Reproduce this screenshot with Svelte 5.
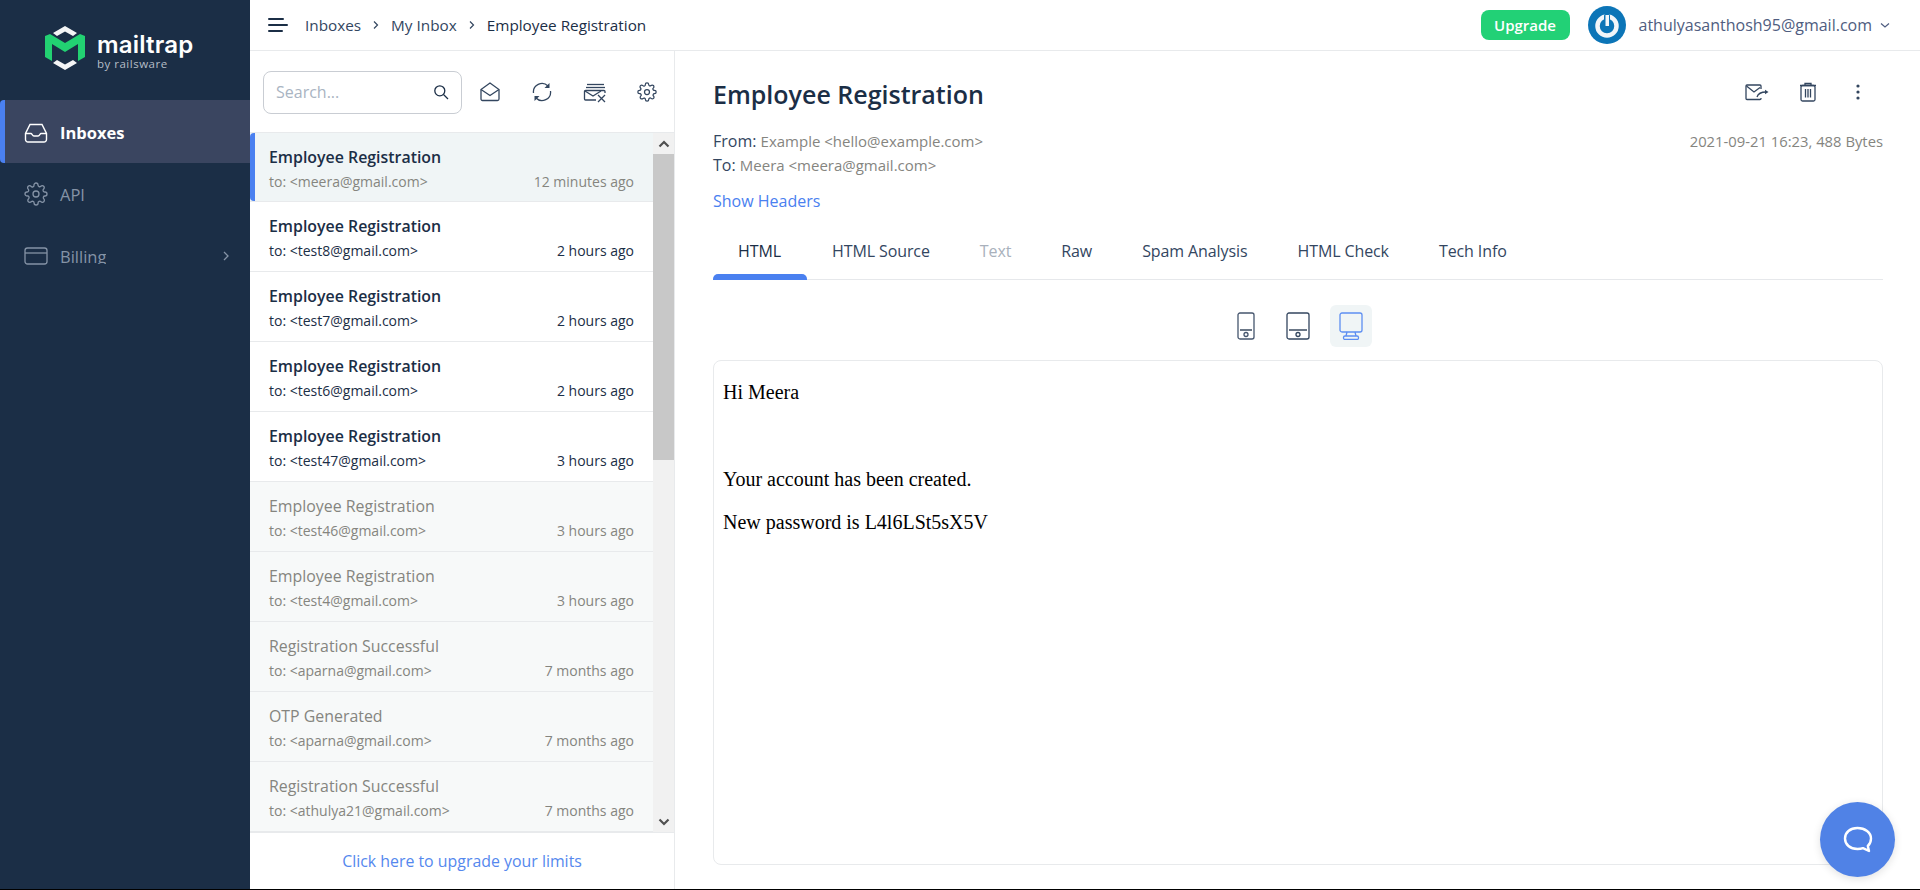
<script lang="ts">
	const messages = [
		{ subject: 'Employee Registration', to: 'meera@gmail.com', time: '12 minutes ago', state: 'selected' },
		{ subject: 'Employee Registration', to: 'test8@gmail.com', time: '2 hours ago', state: 'unread' },
		{ subject: 'Employee Registration', to: 'test7@gmail.com', time: '2 hours ago', state: 'unread' },
		{ subject: 'Employee Registration', to: 'test6@gmail.com', time: '2 hours ago', state: 'unread' },
		{ subject: 'Employee Registration', to: 'test47@gmail.com', time: '3 hours ago', state: 'unread' },
		{ subject: 'Employee Registration', to: 'test46@gmail.com', time: '3 hours ago', state: 'read' },
		{ subject: 'Employee Registration', to: 'test4@gmail.com', time: '3 hours ago', state: 'read' },
		{ subject: 'Registration Successful', to: 'aparna@gmail.com', time: '7 months ago', state: 'read' },
		{ subject: 'OTP Generated', to: 'aparna@gmail.com', time: '7 months ago', state: 'read' },
		{ subject: 'Registration Successful', to: 'athulya21@gmail.com', time: '7 months ago', state: 'read' }
	];

	const tabs = ['HTML', 'HTML Source', 'Text', 'Raw', 'Spam Analysis', 'HTML Check', 'Tech Info'];
</script>

<div class="page">
	<div class="app">
		<aside class="sidebar">
			<div class="logo">
				<svg width="42" height="46" viewBox="0 0 42 46">
					<path d="M21 1 L33 8 L29 11 L21 6.500 L13 11 L9 8 Z" fill="#f4f5f6" />
					<path d="M1 11 L6 9 L21 18 L36 9 L41 11 L41 32 L34 36 L34 19 L21 27 L8 19 L8 36 L1 32 Z" fill="#22d172" />
					<path d="M9 38 L21 45 L33 38 L29 35 L21 39.500 L13 35 Z" fill="#f4f5f6" />
				</svg>
				<div class="logo-text">
					<span class="logo-name">mailtrap</span>
					<span class="logo-by">by railsware</span>
				</div>
			</div>
			<nav>
				<div class="nav-item active">
					<svg width="24" height="24" viewBox="0 0 24 24" fill="none" stroke="#fff" stroke-width="1.400">
						<path d="M6 3.500h12l4.500 9v6a2.500 2.500 0 0 1-2.500 2.500H4a2.500 2.500 0 0 1-2.500-2.500v-6z" />
						<path d="M1.800 12.500H7c1 0 1.200 2.500 3 2.500h4c1.800 0 2-2.500 3-2.500h5.200" />
					</svg>
					<span>Inboxes</span>
				</div>
				<div class="nav-item">
					<svg width="24" height="24" viewBox="0 0 24 24" fill="none" stroke="#8593a6" stroke-width="1.300">
						<circle cx="12" cy="12" r="3" />
						<path d="M19.400 15a1.650 1.650 0 0 0 .33 1.820l.06.06a2 2 0 1 1-2.830 2.830l-.06-.06a1.650 1.650 0 0 0-2.800 1.170V21a2 2 0 1 1-4 0v-.09a1.650 1.650 0 0 0-2.800-1.170l-.06.06a2 2 0 1 1-2.830-2.830l.06-.06A1.650 1.650 0 0 0 3.090 14H3a2 2 0 1 1 0-4h.09a1.650 1.650 0 0 0 1.170-2.800l-.06-.06a2 2 0 1 1 2.830-2.830l.06.06A1.650 1.650 0 0 0 10 3.090V3a2 2 0 1 1 4 0v.09a1.650 1.650 0 0 0 2.800 1.170l.06-.06a2 2 0 1 1 2.830 2.830l-.06.06A1.650 1.650 0 0 0 20.910 10H21a2 2 0 1 1 0 4h-.09a1.650 1.650 0 0 0-1.510 1z" />
					</svg>
					<span>API</span>
				</div>
				<div class="nav-item billing">
					<svg width="24" height="24" viewBox="0 0 24 24" fill="none" stroke="#8593a6" stroke-width="1.300">
						<rect x="1" y="4" width="22" height="16" rx="2.500" />
						<path d="M1 9h22" />
					</svg>
					<span>Billing</span>
					<svg class="chev" width="8" height="12" viewBox="0 0 8 12" fill="none" stroke="#8593a6" stroke-width="1.300">
						<path d="M2 2l4 4-4 4" />
					</svg>
				</div>
			</nav>
		</aside>

		<div class="main">
			<header class="topbar">
				<svg class="burger" width="20" height="16" viewBox="0 0 20 16" fill="#1b2e46">
					<rect y="1" width="16" height="2" rx="1" />
					<rect y="7" width="20" height="2" rx="1" />
					<rect y="13" width="15" height="2" rx="1" />
				</svg>
				<div class="crumbs">
					<span class="crumb">Inboxes</span>
					<svg width="8" height="10" viewBox="0 0 8 10" fill="none" stroke="#33465f" stroke-width="1.200"><path d="M2 1.500L5.500 5 2 8.500" /></svg>
					<span class="crumb">My Inbox</span>
					<svg width="8" height="10" viewBox="0 0 8 10" fill="none" stroke="#33465f" stroke-width="1.200"><path d="M2 1.500L5.500 5 2 8.500" /></svg>
					<span class="crumb current">Employee Registration</span>
				</div>
				<div class="account">
					<span class="upgrade">Upgrade</span>
					<svg class="avatar" width="38" height="38" viewBox="0 0 38 38">
						<circle cx="19" cy="19" r="19" fill="#0c75b7" />
						<circle cx="19" cy="20" r="9.500" fill="none" stroke="#f2f6f9" stroke-width="4.500" />
						<rect x="16" y="8" width="6" height="13" rx="1.500" fill="#0c75b7" />
						<rect x="17.500" y="9" width="3.500" height="11" fill="#f2f6f9" />
					</svg>
					<span class="email">athulyasanthosh95@gmail.com</span>
					<svg width="10" height="7" viewBox="0 0 10 7" fill="none" stroke="#4f5d80" stroke-width="1.200"><path d="M1 1.500l4 3.500 4-3.500" /></svg>
				</div>
			</header>

			<div class="body">
				<section class="list-pane">
					<div class="toolbar">
						<div class="search">
							<span class="placeholder">Search...</span>
							<svg width="16" height="16" viewBox="0 0 16 16" fill="none" stroke="#1b2e46" stroke-width="1.300">
								<circle cx="6.800" cy="6.800" r="5" />
								<path d="M10.500 10.500L15 15" />
							</svg>
						</div>
						<div class="tools">
							<svg width="22" height="22" viewBox="0 0 22 22" fill="none" stroke="#33465f" stroke-width="1.300">
								<path d="M2 8.500L11 2l9 6.500V18a1.500 1.500 0 0 1-1.500 1.500h-15A1.500 1.500 0 0 1 2 18z" />
								<path d="M2 8.500l9 6 9-6" />
							</svg>
							<svg width="22" height="22" viewBox="0 0 22 22" fill="none" stroke="#33465f" stroke-width="1.300">
								<path d="M2.500 12A8.500 8.500 0 0 1 17 5" />
								<path d="M19.500 10A8.500 8.500 0 0 1 5 17" />
								<path d="M18.500 2v5h-5z" fill="#33465f" stroke="none" />
								<path d="M3.500 20v-5h5z" fill="#33465f" stroke="none" />
							</svg>
							<svg width="24" height="22" viewBox="0 0 24 22" fill="none" stroke="#33465f" stroke-width="1.300">
								<path d="M4 3.500h17" />
								<path d="M3 6.500h19" />
								<path d="M13 19H2.500a1 1 0 0 1-1-1V10.500a1 1 0 0 1 1-1h18.500a1 1 0 0 1 1 1V12" />
								<path d="M2 10l8 5 8-5" />
								<path d="M15 14l7 7M22 14l-7 7" />
							</svg>
							<svg width="20" height="20" viewBox="0 0 24 24" fill="none" stroke="#33465f" stroke-width="1.500">
								<circle cx="12" cy="12" r="3" />
								<path d="M19.400 15a1.650 1.650 0 0 0 .33 1.820l.06.06a2 2 0 1 1-2.830 2.830l-.06-.06a1.650 1.650 0 0 0-2.800 1.170V21a2 2 0 1 1-4 0v-.09a1.650 1.650 0 0 0-2.800-1.170l-.06.06a2 2 0 1 1-2.830-2.830l.06-.06A1.650 1.650 0 0 0 3.090 14H3a2 2 0 1 1 0-4h.09a1.650 1.650 0 0 0 1.170-2.800l-.06-.06a2 2 0 1 1 2.830-2.830l.06.06A1.650 1.650 0 0 0 10 3.090V3a2 2 0 1 1 4 0v.09a1.650 1.650 0 0 0 2.800 1.170l.06-.06a2 2 0 1 1 2.830 2.830l-.06.06A1.650 1.650 0 0 0 20.910 10H21a2 2 0 1 1 0 4h-.09a1.650 1.650 0 0 0-1.510 1z" />
							</svg>
						</div>
					</div>

					<div class="list-wrap">
						<ul class="list">
							{#each messages as m}
								<li class="row {m.state}">
									<div class="subject">{m.subject}</div>
									<div class="meta">
										<span>to: &lt;{m.to}&gt;</span>
										<span>{m.time}</span>
									</div>
								</li>
							{/each}
						</ul>
						<div class="scrollbar">
							<div class="arrow"><svg width="12" height="8" viewBox="0 0 12 8" fill="none" stroke="#505050" stroke-width="2.200"><path d="M1.500 6.500L6 2l4.500 4.500" /></svg></div>
							<div class="track"><div class="thumb"></div></div>
							<div class="arrow"><svg width="12" height="8" viewBox="0 0 12 8" fill="none" stroke="#505050" stroke-width="2.200"><path d="M1.500 1.500L6 6l4.500-4.500" /></svg></div>
						</div>
					</div>

					<div class="limits">Click here to upgrade your limits</div>
				</section>

				<section class="detail">
					<div class="detail-head">
						<h1>Employee Registration</h1>
						<div class="actions">
							<svg width="24" height="18" viewBox="0 0 24 18" fill="none" stroke="#33465f" stroke-width="1.300">
								<path d="M16 15v.5a1 1 0 0 1-1 1H2a1 1 0 0 1-1-1V3a1 1 0 0 1 1-1h13a1 1 0 0 1 1 1v3" />
								<path d="M1.500 3l7.500 6 6-4.500" />
								<path d="M12 14c1-3 4-5 9-5" />
								<path d="M20 6.800l3.500 2.200-3.500 2.200z" fill="#33465f" stroke="none" />
							</svg>
							<svg width="18" height="20" viewBox="0 0 18 20" fill="none" stroke="#33465f" stroke-width="1.300">
								<path d="M1 3.500h16M6 3.500V1.500h6v2" />
								<rect x="2" y="3.500" width="14" height="15.500" rx="1.500" />
								<path d="M6.500 7v8.500M9 7v8.500M11.500 7v8.500" />
							</svg>
							<svg class="dots" width="4" height="16" viewBox="0 0 4 16" fill="#33465f">
								<circle cx="2" cy="2" r="1.600" /><circle cx="2" cy="8" r="1.600" /><circle cx="2" cy="14" r="1.600" />
							</svg>
						</div>
					</div>

					<div class="addr-row">
						<div class="addr">
							<div><span class="label">From:</span> <span class="val">Example &lt;hello@example.com&gt;</span></div>
							<div><span class="label">To:</span> <span class="val">Meera &lt;meera@gmail.com&gt;</span></div>
						</div>
						<div class="stamp">2021-09-21 16:23, 488 Bytes</div>
					</div>

					<div class="show-headers">Show Headers</div>

					<div class="tabs">
						{#each tabs as tab, i}
							<span class="tab" class:active={i === 0} class:disabled={tab === 'Text'}>{tab}</span>
						{/each}
					</div>

					<div class="devices">
						<span class="device">
							<svg width="18" height="28" viewBox="0 0 18 28" fill="none" stroke="#46566e" stroke-width="1.300">
								<rect x="1" y="1" width="16" height="26" rx="2" />
								<path d="M3 18h12" stroke="#1b2e46" />
								<circle cx="9" cy="22.500" r="2" />
							</svg>
						</span>
						<span class="device">
							<svg width="24" height="28" viewBox="0 0 24 28" fill="none" stroke="#33465f" stroke-width="1.300">
								<rect x="1" y="1" width="22" height="26" rx="2" />
								<path d="M3 18h18" stroke="#1b2e46" />
								<circle cx="12" cy="22.500" r="2" />
							</svg>
						</span>
						<span class="device on">
							<svg width="24" height="28" viewBox="0 0 24 28" fill="none" stroke="#5d8ef2" stroke-width="1.300">
								<rect x="1" y="1" width="22" height="19" rx="2" />
								<path d="M8 20l-1 4M16 20l1 4" />
								<rect x="4.500" y="24" width="15" height="3.500" rx="1.500" />
							</svg>
						</span>
					</div>

					<div class="preview">
						<p>Hi Meera</p>
						<p class="gap">Your account has been created.</p>
						<p>New password is L4l6LSt5sX5V</p>
					</div>
				</section>
			</div>
		</div>
	</div>
	<div class="chat">
		<svg width="32" height="30" viewBox="0 0 32 30" fill="none" stroke="#fff" stroke-width="2.400" stroke-linejoin="round">
			<path d="M15.500 3C8 3 3 7.500 3 13.500S8 24 15.500 24c2 0 4-.3 5.500-.8l6 2.800-1.200-5C28 19 29 16.500 29 13.500 29 7.500 23 3 15.500 3z" />
		</svg>
	</div>
</div>

<style>
	:global(body) {
		margin: 0;
		background: #000;
	}

	.page {
		position: relative;
		height: 889px;
		overflow: hidden;
		background: #fff;
		font-family: 'Open Sans', 'Noto Sans', sans-serif;
		color: #1b2e46;
	}

	.app {
		display: flex;
		height: 100%;
	}

	.sidebar {
		flex: 0 0 250px;
		background: #1b2e46;
		color: #8593a6;
	}

	.logo {
		display: flex;
		align-items: center;
		gap: 11px;
		height: 100px;
		padding: 0 0 4px 44px;
		box-sizing: border-box;
	}

	.logo-text {
		display: flex;
		flex-direction: column;
		padding-top: 7px;
	}

	.logo-name {
		font-family: 'Inter', sans-serif;
		font-size: 24px;
		font-weight: 600;
		line-height: 24px;
		color: #fff;
		letter-spacing: 0.2px;
	}

	.logo-by {
		font-size: 11.500px;
		line-height: 13px;
		color: #b5bdc7;
		letter-spacing: 0.5px;
	}

	.nav-item {
		display: flex;
		align-items: center;
		gap: 12px;
		height: 62px;
		padding-left: 24px;
		font-size: 16.500px;
		box-sizing: border-box;
	}

	.nav-item.active {
		height: 63px;
		background: #3a4560;
		border-left: 5px solid #4a80f0;
		border-radius: 4px 0 0 4px;
		padding: 2px 0 0 19px;
		color: #fff;
		font-weight: 700;
	}

	.billing span {
		height: 19px;
		margin-bottom: 3px;
		line-height: 24px;
		overflow: hidden;
	}

	.chev {
		margin-left: auto;
		margin-right: 20px;
	}

	.main {
		flex: 1;
		min-width: 0;
		display: flex;
		flex-direction: column;
	}

	.topbar {
		flex: 0 0 51px;
		box-sizing: border-box;
		display: flex;
		align-items: center;
		border-bottom: 1px solid #e8eaec;
		padding: 0 30px 0 18px;
	}

	.burger {
		margin-right: 17px;
	}

	.crumbs {
		display: flex;
		align-items: center;
		gap: 11px;
		font-size: 15.300px;
	}

	.crumb {
		color: #33465f;
	}

	.crumb.current {
		color: #1b2e46;
	}

	.account {
		margin-left: auto;
		display: flex;
		align-items: center;
	}

	.upgrade {
		display: block;
		width: 89px;
		height: 30px;
		line-height: 30px;
		text-align: center;
		background: #22d176;
		border-radius: 8px;
		color: #fff;
		font-size: 15px;
		font-weight: 600;
	}

	.avatar {
		margin-left: 18px;
	}

	.email {
		margin: 0 8px 0 13px;
		font-size: 16px;
		color: #4f5d80;
	}

	.body {
		flex: 1;
		min-height: 0;
		display: flex;
	}

	.list-pane {
		flex: 0 0 425px;
		box-sizing: border-box;
		border-right: 1px solid #e8eaec;
		display: flex;
		flex-direction: column;
	}

	.toolbar {
		flex: 0 0 81px;
		box-sizing: border-box;
		display: flex;
		align-items: center;
		padding: 1px 0 0 13px;
	}

	.search {
		width: 199px;
		height: 43px;
		box-sizing: border-box;
		border: 1px solid #c9cdd3;
		border-radius: 8px;
		display: flex;
		align-items: center;
		justify-content: space-between;
		padding: 0 12px 0 12px;
	}

	.tools {
		display: flex;
		align-items: center;
		gap: 30px;
		margin-left: 17px;
	}

	.placeholder {
		font-size: 16px;
		color: #a9b4c2;
	}

	.list-wrap {
		flex: 1;
		min-height: 0;
		display: flex;
		border-top: 1px solid #e8eaec;
	}

	.list {
		flex: 1;
		min-width: 0;
		margin: 0;
		padding: 0;
		list-style: none;
		overflow: hidden;
	}

	.row {
		height: 70px;
		box-sizing: border-box;
		padding: 12px 19px 0 19px;
		border-bottom: 1px solid #e8eaec;
		position: relative;
		color: #1b2e46;
	}

	.row.read {
		background: #f7f9f9;
		color: #85857f;
	}

	.row.selected {
		background: #f0f5f6;
		height: 69px;
	}

	.row.selected::before {
		content: '';
		position: absolute;
		left: 0;
		top: 0;
		bottom: 0;
		width: 5px;
		background: #4a80f0;
		border-radius: 4px 0 0 4px;
	}

	.subject {
		font-size: 15.900px;
		line-height: 24px;
		font-weight: 600;
	}

	.row.read .subject {
		font-weight: 400;
	}

	.meta {
		display: flex;
		justify-content: space-between;
		font-size: 14px;
		line-height: 24px;
		margin-top: 1px;
	}

	.row.selected .meta {
		color: #85857f;
	}

	.scrollbar {
		flex: 0 0 21px;
		background: #f1f1f1;
		display: flex;
		flex-direction: column;
	}

	.arrow {
		flex: 0 0 21px;
		display: flex;
		align-items: center;
		justify-content: center;
	}

	.track {
		flex: 1;
	}

	.thumb {
		height: 306px;
		background: #c8c8c8;
	}

	.limits {
		flex: 0 0 57px;
		border-top: 1px solid #e8eaec;
		box-sizing: border-box;
		text-align: center;
		line-height: 56px;
		font-size: 15.900px;
		color: #5588ee;
	}

	.detail {
		flex: 1;
		min-width: 0;
		display: flex;
		flex-direction: column;
		padding: 0 37px 24px 38px;
	}

	.detail-head {
		display: flex;
		align-items: center;
		justify-content: space-between;
		height: 50px;
		margin-top: 18px;
	}

	h1 {
		margin: 0;
		font-size: 25px;
		font-weight: 600;
		line-height: 50px;
	}

	.actions {
		display: flex;
		align-items: center;
		gap: 30px;
		margin-right: 23px;
		padding-bottom: 4px;
	}

	.dots {
		margin-left: 9px;
	}

	.addr-row {
		display: flex;
		justify-content: space-between;
		margin-top: 10px;
	}

	.addr {
		font-size: 16px;
		line-height: 24px;
	}

	.label {
		color: #33465f;
	}

	.val {
		font-size: 15px;
		color: #85857f;
	}

	.stamp {
		font-size: 14.800px;
		line-height: 24px;
		color: #85857f;
	}

	.show-headers {
		margin-top: 10px;
		font-size: 16px;
		line-height: 28px;
		color: #4a80f0;
	}

	.tabs {
		display: flex;
		margin-top: 15px;
		height: 50px;
		border-bottom: 1px solid #e6e8eb;
		box-sizing: border-box;
	}

	.tab {
		position: relative;
		padding: 0 25px;
		font-size: 16px;
		line-height: 42px;
		letter-spacing: -0.1px;
		color: #33465f;
	}

	.tab.active {
		color: #1b2e46;
		min-width: 44px;
	}

	.tab.active::after {
		content: '';
		position: absolute;
		left: 0;
		right: 0;
		bottom: -1px;
		height: 6px;
		background: #4a80f0;
		border-radius: 5px 5px 0 0;
	}

	.tab.disabled {
		color: #a9b1bc;
	}

	.devices {
		display: flex;
		justify-content: center;
		gap: 10.500px;
		margin-top: 25px;
	}

	.device {
		width: 42px;
		height: 42px;
		display: flex;
		align-items: center;
		justify-content: center;
		border-radius: 6px;
	}

	.device.on {
		background: #f0f5f6;
	}

	.preview {
		flex: 1;
		margin-top: 13px;
		border: 1px solid #e8eaec;
		border-radius: 8px;
		padding: 0 9px;
		font-family: 'Liberation Serif', serif;
		font-size: 20px;
		color: #000;
	}

	.preview p {
		margin: 20px 0;
	}

	.preview p.gap {
		margin-top: 64px;
	}

	.chat {
		position: absolute;
		right: 25px;
		bottom: 12px;
		width: 75px;
		height: 75px;
		border-radius: 50%;
		background: #5082e6;
		display: flex;
		align-items: center;
		justify-content: center;
		box-shadow: 0 2px 8px rgba(0, 0, 0, 0.12);
	}
</style>
